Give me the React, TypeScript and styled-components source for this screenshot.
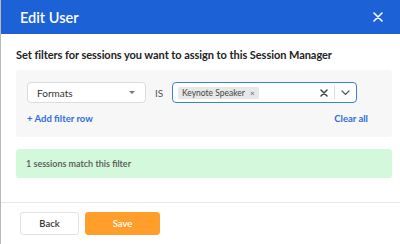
import React from "react";
import styled, { createGlobalStyle } from "styled-components";

const Global = createGlobalStyle`
  html, body { margin: 0; padding: 0; background: #fff; }
  body { font-family: Lato, "Open Sans", Arial, sans-serif; }
  * { box-sizing: border-box; }
`;

const Dialog = styled.div`
  width: 400px;
  height: 244px;
  border-left: 1px solid #b9b9b9;
  display: flex;
  flex-direction: column;
  background: #fff;
`;

const Header = styled.div`
  height: 34px;
  background: #1d61d7;
  display: flex;
  align-items: center;
  justify-content: space-between;
  padding: 0 17px 0 19px;
  color: #fff;
`;

const Title = styled.div`
  font-size: 14.5px;
  font-weight: 600;
`;

const CloseBtn = styled.div`
  width: 10px;
  height: 10px;
  display: flex;
`;

const Body = styled.div`
  padding: 13px 8px 0 15px;
  display: flex;
  flex-direction: column;
  flex: 1;
`;

const Heading = styled.div`
  font-size: 11px;
  font-weight: 700;
  color: #222;
  height: 23px;
  line-height: 16px;
  letter-spacing: -0.05px;
`;

const FilterPanel = styled.div`
  background: #f7f7f7;
  border-radius: 3px;
  padding: 12px 24px 8px 11px;
  display: flex;
  flex-direction: column;
  gap: 10px;
  height: 67px;
`;

const FilterRow = styled.div`
  display: flex;
  align-items: center;
`;

const Select = styled.div`
  width: 119px;
  height: 21px;
  border: 1px solid #dcdcdc;
  border-radius: 4px;
  background: #fff;
  display: flex;
  align-items: center;
  justify-content: space-between;
  padding: 0 10px 0 9px;
  font-size: 10px;
  color: #333;
`;

const Caret = styled.span`
  width: 0;
  height: 0;
  border-left: 3.5px solid transparent;
  border-right: 3.5px solid transparent;
  border-top: 3.5px solid #777;
`;

const Is = styled.div`
  width: 26px;
  text-align: center;
  font-size: 10px;
  color: #555;
`;

const Multi = styled.div`
  width: 185px;
  height: 21px;
  border: 1.5px solid #3b7fe6;
  border-radius: 4px;
  background: #fff;
  display: flex;
  align-items: center;
  padding: 0 0 0 5px;
`;

const Tag = styled.div`
  height: 12px;
  background: #e8e8e8;
  border-radius: 2px;
  display: flex;
  align-items: center;
  gap: 5px;
  padding: 0 4px;
  font-size: 8.5px;
  color: #444;
`;

const TagX = styled.span`
  font-size: 8px;
  color: #666;
`;

const Spacer = styled.div`
  flex: 1;
`;

const IconBox = styled.div<{ $w: number }>`
  width: ${(p) => p.$w}px;
  display: flex;
  align-items: center;
  justify-content: center;
`;

const Sep = styled.div`
  width: 1px;
  height: 13px;
  background: #ddd;
`;

const LinkRow = styled.div`
  display: flex;
  justify-content: space-between;
  font-size: 9.5px;
  font-weight: 700;
  color: #2d6fe0;
`;

const Match = styled.div`
  margin-top: 12px;
  height: 29px;
  background: #d3f8dc;
  border-radius: 3px;
  display: flex;
  align-items: center;
  padding-left: 10px;
  font-size: 9px;
  font-weight: 600;
  color: #555;
`;

const Footer = styled.div`
  border-top: 1px solid #e8e8e8;
  height: 42px;
  display: flex;
  align-items: center;
  gap: 6px;
  padding: 0 0 0 19px;
`;

const Button = styled.div<{ $primary?: boolean }>`
  height: 23px;
  width: ${(p) => (p.$primary ? 75 : 59)}px;
  border-radius: 3px;
  display: flex;
  align-items: center;
  justify-content: center;
  font-size: 9.5px;
  font-weight: 600;
  background: ${(p) => (p.$primary ? "#ff9e2a" : "#fff")};
  color: ${(p) => (p.$primary ? "#fff" : "#333")};
  border: 1px solid ${(p) => (p.$primary ? "#ff9e2a" : "#e2e2e2")};
`;

export default function App() {
  return (
    <>
      <Global />
      <Dialog>
        <Header>
          <Title>Edit User</Title>
          <CloseBtn>
            <svg width="10" height="10" viewBox="0 0 10 10">
              <path d="M1 1L9 9M9 1L1 9" stroke="#fff" strokeWidth="1.6" strokeLinecap="round" />
            </svg>
          </CloseBtn>
        </Header>
        <Body>
          <Heading>Set filters for sessions you want to assign to this Session Manager</Heading>
          <FilterPanel>
            <FilterRow>
              <Select>
                Formats
                <Caret />
              </Select>
              <Is>IS</Is>
              <Multi>
                <Tag>
                  Keynote Speaker <TagX>×</TagX>
                </Tag>
                <Spacer />
                <IconBox $w={20}>
                  <svg width="8" height="8" viewBox="0 0 8 8">
                    <path d="M1 1L7 7M7 1L1 7" stroke="#444" strokeWidth="1.5" strokeLinecap="round" />
                  </svg>
                </IconBox>
                <Sep />
                <IconBox $w={21}>
                  <svg width="9" height="6" viewBox="0 0 9 6">
                    <path d="M1 1L4.5 4.5L8 1" stroke="#555" strokeWidth="1.2" fill="none" strokeLinecap="round" />
                  </svg>
                </IconBox>
              </Multi>
            </FilterRow>
            <LinkRow>
              <span>+ Add filter row</span>
              <span>Clear all</span>
            </LinkRow>
          </FilterPanel>
          <Match>1 sessions match this filter</Match>
        </Body>
        <Footer>
          <Button>Back</Button>
          <Button $primary>Save</Button>
        </Footer>
      </Dialog>
    </>
  );
}
